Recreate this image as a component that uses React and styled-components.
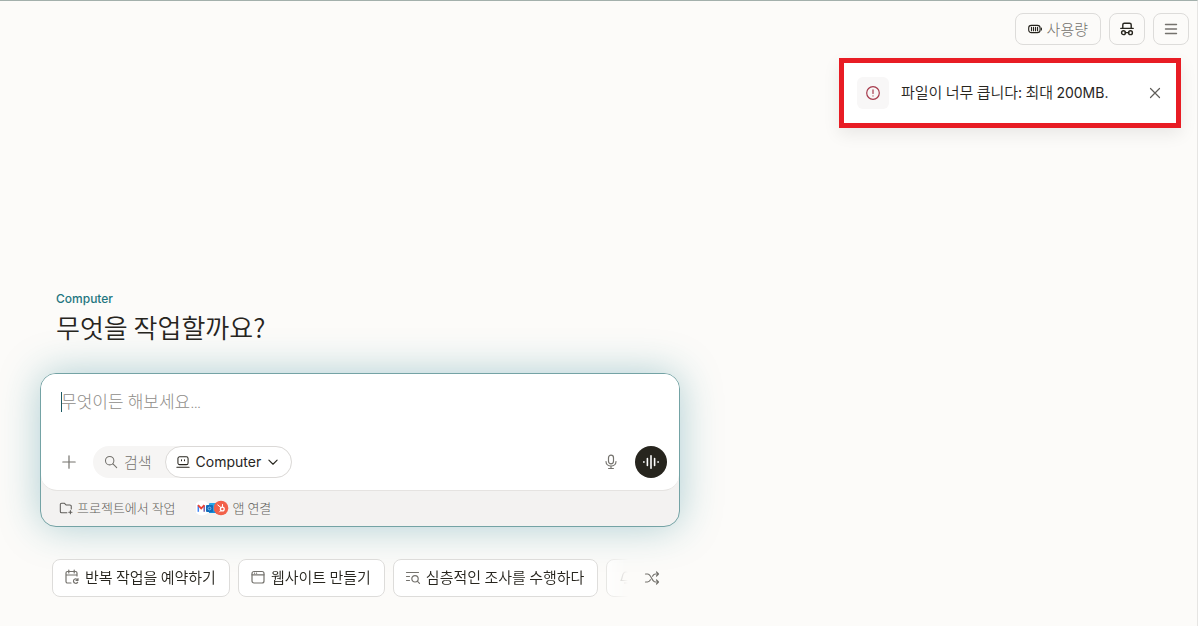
import React from "react";
import styled, { createGlobalStyle } from "styled-components";

const GlobalStyle = createGlobalStyle`
  * {
    box-sizing: border-box;
  }

  body {
    margin: 0;
    background: #fcfbf9;
    color: #27251e;
    font-family: "Noto Sans CJK KR", sans-serif;
    font-size: 15px;
    font-weight: 350;
  }

  button,
  textarea {
    margin: 0;
    padding: 0;
    border: 0;
    background: none;
    color: inherit;
    font: inherit;
  }
`;

const Page = styled.div`
  min-height: 100vh;
  border-top: 1px solid #a3b0ac;
  border-right: 1px solid #e6e5e3;
  overflow: hidden;
`;

const TopBar = styled.header`
  display: flex;
  justify-content: flex-end;
  gap: 8px;
  padding: 12px 8px 0;
`;

const TopButton = styled.button`
  display: flex;
  align-items: center;
  justify-content: center;
  gap: 5px;
  min-width: 36px;
  height: 32px;
  padding: 0 ${(props) => (props.$wide ? "12px" : "0")};
  border: 1px solid #dddcda;
  border-radius: 8px;
  color: #74726d;
  font-weight: 300;
  line-height: 20px;
`;

const DarkIcon = styled.span`
  display: flex;
  color: #27251e;
`;

const Toast = styled.div`
  position: absolute;
  top: 58px;
  right: 17px;
  display: flex;
  align-items: center;
  width: 342px;
  height: 70px;
  padding: 0 13px;
  border: 5px solid #e81c24;
  background: #fff;
  box-shadow: 0 6px 16px rgba(0, 0, 0, 0.08);
`;

const ToastIcon = styled.div`
  display: flex;
  align-items: center;
  justify-content: center;
  width: 32px;
  height: 32px;
  margin-right: 12px;
  border-radius: 6px;
  background: #f8f7f7;
  color: #a63a4c;
`;

const ToastText = styled.p`
  flex: 1;
  margin: 0;
  padding-bottom: 2px;
  line-height: 20px;
`;

const Size = styled.span`
  font-family: Inter, sans-serif;
  font-size: 14px;
  font-weight: 400;
`;

const CloseButton = styled.button`
  display: flex;
  color: #5f5d59;
`;

const Main = styled.main`
  max-width: 680px;
  padding: 245px 0 0 40px;
`;

const Heading = styled.div`
  padding: 0 16px;
`;

const Label = styled.div`
  color: #1f7680;
  font-family: Inter, sans-serif;
  font-size: 12px;
  font-weight: 500;
  line-height: 18px;
`;

const Title = styled.h1`
  margin: 2px 0 29px;
  font-size: 26px;
  font-weight: 350;
  line-height: 34px;
`;

const Composer = styled.section`
  border: 1px solid #74a3a5;
  border-radius: 16px;
  background: #f3f2f1;
  box-shadow: 0 0 40px rgba(32, 128, 141, 0.36);
  overflow: hidden;
`;

const Editor = styled.div`
  border-bottom: 1px solid #e5e3e1;
  border-radius: 0 0 16px 16px;
  background: #fff;
`;

const Field = styled.div`
  position: relative;
  padding: 16px 20px 0;
`;

const Caret = styled.span`
  position: absolute;
  top: 18px;
  left: 20px;
  width: 1px;
  height: 20px;
  background: #1c5a64;
`;

const Input = styled.textarea`
  display: block;
  width: 100%;
  height: 48px;
  outline: none;
  resize: none;
  caret-color: transparent;
  font-family: Roboto, "Noto Sans CJK KR", sans-serif;
  font-size: 17px;
  line-height: 24px;

  &::placeholder {
    color: #8f8d89;
    font-weight: 300;
    opacity: 1;
  }
`;

const Toolbar = styled.div`
  display: flex;
  align-items: center;
  padding: 8px 12px 12px;
`;

const IconButton = styled.button`
  display: flex;
  align-items: center;
  justify-content: center;
  width: 32px;
  height: 32px;
  color: #74726d;
`;

const Modes = styled.div`
  display: flex;
  margin: 0 auto 0 8px;
  border-radius: 16px;
  background: #f6f5f4;
`;

const Mode = styled.button`
  display: flex;
  align-items: center;
  gap: 6px;
  height: 32px;
  padding: 0 13px 0 11px;
  border-radius: 16px;
  color: #74726d;
  font-weight: 300;
  line-height: 20px;
`;

const ActiveMode = styled(Mode)`
  padding: 0 12px 0 10px;
  border: 1px solid #dbd9d7;
  background: #fff;
  color: #27251e;
  font-family: Inter, sans-serif;
  font-size: 14px;
  font-weight: 400;
`;

const VoiceButton = styled(IconButton)`
  margin-left: 8px;
  border-radius: 16px;
  background: #27251e;
  color: #fff;
`;

const Footer = styled.div`
  display: flex;
  align-items: center;
  gap: 20px;
  height: 35px;
  padding: 0 18px 2px;
`;

const FooterButton = styled.button`
  display: flex;
  align-items: center;
  gap: 4px;
  color: #5f5d59;
  font-size: 13px;
  font-weight: 300;
  line-height: 18px;
`;

const Suggestions = styled.div`
  display: flex;
  align-items: center;
  padding: 32px 12px 0;
`;

const ChipList = styled.div`
  display: flex;
  flex: 1;
  gap: 8px;
  min-width: 0;
  overflow: hidden;
  mask-image: linear-gradient(to right, #000 calc(100% - 40px), transparent calc(100% - 8px));
`;

const Chip = styled.button`
  display: flex;
  flex: none;
  align-items: center;
  gap: 5px;
  height: 38px;
  padding: 0 13px 2px 11px;
  border: 1px solid #dddcda;
  border-radius: 8px;
  background: #fff;
  line-height: 20px;
  white-space: nowrap;

  svg {
    color: #74726d;
  }
`;

const Icon = ({ size = 16, width = 1.2, children }) => (
  <svg
    width={size}
    height={size}
    viewBox="0 0 16 16"
    fill="none"
    stroke="currentColor"
    strokeWidth={width}
    strokeLinecap="round"
    strokeLinejoin="round"
    aria-hidden="true"
  >
    {children}
  </svg>
);

const UsageIcon = () => (
  <Icon size={14} width={1.3}>
    <rect x="0.8" y="3.8" width="13" height="8.4" rx="3" />
    <path d="M4 6v4M6.3 6v4M8.6 6v4M10.9 6v4M15.3 7v2" />
  </Icon>
);

const IncognitoIcon = () => (
  <Icon width={1.4}>
    <path d="M3.8 7V3.8a1.6 1.6 0 0 1 1.6-1.6h5.2a1.6 1.6 0 0 1 1.6 1.6V7M1.8 7.4h12.4M6.2 11.6h3.6" />
    <circle cx="4.5" cy="11.7" r="1.9" />
    <circle cx="11.5" cy="11.7" r="1.9" />
  </Icon>
);

const AppLogos = () => (
  <svg width="33" height="16" viewBox="0 0 33 16" aria-hidden="true">
    <circle cx="6" cy="8" r="7.5" fill="#fff" />
    <path d="M2.3 11.8V5.5" stroke="#4285f4" strokeWidth="1.5" />
    <path d="M8.2 11.8V5.5" stroke="#7a5fa8" strokeWidth="1.5" />
    <path d="M2 5.2l3.2 3.2 3.2-3.2" fill="none" stroke="#ea4335" strokeWidth="1.8" />
    <rect x="13" y="3" width="9" height="10" rx="1" fill="#28a8ea" />
    <path d="M13 8l5 3 4-2v4h-9z" fill="#1490df" />
    <rect x="10" y="5" width="7" height="7" rx="1" fill="#0f6cbd" />
    <circle cx="13.5" cy="8.5" r="1.4" fill="none" stroke="#7fbdec" />
    <circle cx="25" cy="8" r="7.3" fill="#f2614a" />
    <g fill="none" stroke="#fff" strokeLinecap="round">
      <circle cx="26.3" cy="9" r="1.9" strokeWidth="1.3" />
      <path d="M26.5 7V4.5M25 7.6l-3.2-2.6M25 10.5l-1.4 1.4" />
    </g>
  </svg>
);

const App = () => {
  return (
    <>
      <GlobalStyle />
      <Page>
        <TopBar>
          <TopButton $wide>
            <DarkIcon>
              <UsageIcon />
            </DarkIcon>
            사용량
          </TopButton>
          <TopButton aria-label="시크릿 모드">
            <DarkIcon>
              <IncognitoIcon />
            </DarkIcon>
          </TopButton>
          <TopButton aria-label="메뉴">
            <Icon width={1.4}>
              <path d="M2.5 3.5h11M2.5 8h11M2.5 12.5h11" />
            </Icon>
          </TopButton>
        </TopBar>

        <Toast role="alert">
          <ToastIcon>
            <Icon>
              <circle cx="8" cy="8" r="6.3" />
              <path d="M8 4.8v3.6M8 10.9v.1" />
            </Icon>
          </ToastIcon>
          <ToastText>
            파일이 너무 큽니다: 최대 <Size>200MB.</Size>
          </ToastText>
          <CloseButton aria-label="닫기">
            <Icon>
              <path d="M3.5 3.5l9 9M12.5 3.5l-9 9" />
            </Icon>
          </CloseButton>
        </Toast>

        <Main>
          <Heading>
            <Label>Computer</Label>
            <Title>무엇을 작업할까요?</Title>
          </Heading>

          <Composer>
            <Editor>
              <Field>
                <Caret />
                <Input aria-label="작업 입력" placeholder="무엇이든 해보세요…" />
              </Field>
              <Toolbar>
                <IconButton aria-label="추가">
                  <Icon>
                    <path d="M8 1.8v12.4M1.8 8h12.4" />
                  </Icon>
                </IconButton>
                <Modes>
                  <Mode>
                    <Icon size={14}>
                      <circle cx="6.5" cy="6.5" r="4.8" />
                      <path d="M10.2 10.2l4.3 4.3" />
                    </Icon>
                    검색
                  </Mode>
                  <ActiveMode>
                    <Icon size={14}>
                      <rect x="2.2" y="2" width="11.6" height="9" rx="2" />
                      <path d="M1 14h14M6.3 5.5v1M9.7 5.5v1" />
                    </Icon>
                    Computer
                    <Icon size={12} width={1.5}>
                      <path d="M2.5 5.5L8 11l5.5-5.5" />
                    </Icon>
                  </ActiveMode>
                </Modes>
                <IconButton aria-label="음성 입력">
                  <Icon>
                    <rect x="5.5" y="1.2" width="5" height="8.6" rx="2.5" />
                    <path d="M3 7.5c0 6 10 6 10 0M8 12v2.5M5.6 14.5h4.8" />
                  </Icon>
                </IconButton>
                <VoiceButton aria-label="음성 모드">
                  <Icon width={1.6}>
                    <path d="M.9 7.8v.4M4.4 4.5v7M8 1.8v12.4M11.6 4.5v7M15.1 7.8v.4" />
                  </Icon>
                </VoiceButton>
              </Toolbar>
            </Editor>
            <Footer>
              <FooterButton>
                <Icon size={14}>
                  <path d="M9 13.5H3A1.5 1.5 0 0 1 1.5 12V4A1.5 1.5 0 0 1 3 2.5h3l2 2h4.5A1.5 1.5 0 0 1 14 6v3M13 11v3.6M11.2 12.8h3.6" />
                </Icon>
                프로젝트에서 작업
              </FooterButton>
              <FooterButton>
                <AppLogos />앱 연결
              </FooterButton>
            </Footer>
          </Composer>

          <Suggestions>
            <ChipList>
              <Chip>
                <Icon>
                  <path d="M7 14H3.5A1.5 1.5 0 0 1 2 12.5V4a1.5 1.5 0 0 1 1.5-1.5h8A1.5 1.5 0 0 1 13 4v3M2 6h11M4.8 1v3M10.2 1v3M14 9.5v2h-2M13.7 11.2c-1.5-2.5-4.7-1-4.2 1.3.4 2 3 2.4 4.1.8" />
                </Icon>
                반복 작업을 예약하기
              </Chip>
              <Chip>
                <Icon>
                  <rect x="2" y="2.5" width="12" height="11.5" rx="2" />
                  <path d="M2 5.8h12M4.5 4.2h.1M6.5 4.2h.1" />
                </Icon>
                웹사이트 만들기
              </Chip>
              <Chip>
                <Icon>
                  <path d="M1.5 3.5h12M1.5 7.5h3M1.5 11.5h3M12.3 12.2l2.2 2.2" />
                  <circle cx="10" cy="9.8" r="3.2" />
                </Icon>
                심층적인 조사를 수행하다
              </Chip>
              <Chip aria-label="알림">
                <Icon>
                  <path d="M3 11.5c2-2 .5-8.5 5-8.5s3 6.5 5 8.5zM6.5 14h3" />
                </Icon>
              </Chip>
            </ChipList>
            <IconButton aria-label="추천 섞기">
              <Icon>
                <path d="M1.5 4h2c4 0 4 8 8 8h3M1.5 12h2c1.4 0 2.3-1 3-2.2M8.5 6.2C9.2 5 10 4 11.5 4h3M12.5 2l2 2-2 2M12.5 10l2 2-2 2" />
              </Icon>
            </IconButton>
          </Suggestions>
        </Main>
      </Page>
    </>
  );
};

export default App;
